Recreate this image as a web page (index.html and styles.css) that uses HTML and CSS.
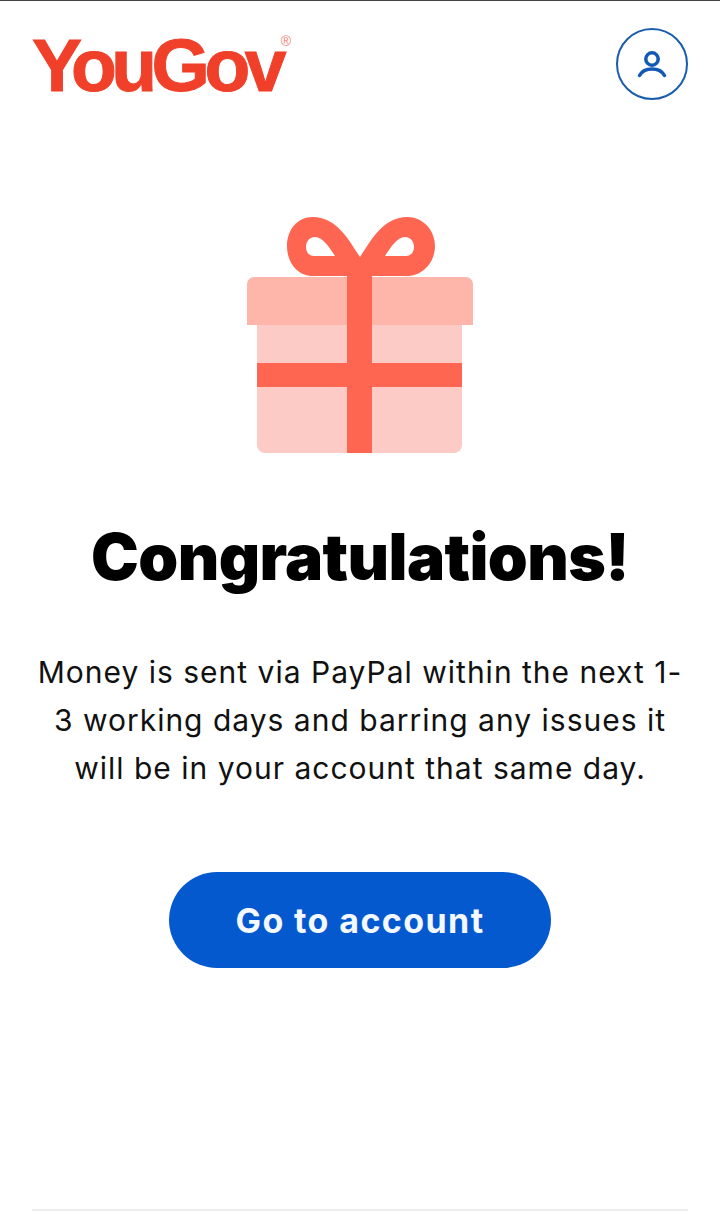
FILE: index.html
```html
<!DOCTYPE html>
<html lang="en">

<head>
  <meta charset="UTF-8">
  <meta name="viewport" content="width=device-width, initial-scale=1.0">
  <title>YouGov - Congratulations</title>
  <link rel="stylesheet" href="styles.css">
</head>

<body>
  <header class="top-bar">
    <div class="logo">YouGov<span class="logo-reg">®</span></div>
    <div class="account-icon">
      <svg width="32" height="32" viewBox="0 0 32 32" fill="none" stroke="#1259b5" stroke-width="3.5" stroke-linecap="round">
        <circle cx="16" cy="11" r="6.200" />
        <path d="M3.500 27.500c2.200-4.200 6.800-6.500 12.500-6.500s10.300 2.300 12.500 6.500" />
      </svg>
    </div>
  </header>

  <main class="content">
    <svg class="gift" width="226" height="236" viewBox="0 0 226 236">
      <rect class="gift-body" x="10" y="100" width="205" height="136" rx="8" />
      <path class="gift-lid" d="M7 60H219a7 7 0 0 1 7 7V108H0V67a7 7 0 0 1 7-7z" />
      <path class="gift-ribbon" fill-rule="evenodd" d="M113 40C104 27 91 0 66 0C50 0 40 13 40 29C40 45 50 59 66 59H160C176 59 188 45 188 29C188 13 176 0 160 0C135 0 122 27 113 40zM88 39H67C62 39 59 35 59 30C59 24 63 20 68 20C76 20 82 30 88 39zM138 39H159C164 39 167 35 167 30C167 24 163 20 158 20C150 20 144 30 138 39z" />
      <rect class="gift-ribbon" x="100" y="59" width="25" height="177" />
      <rect class="gift-ribbon" x="10" y="146" width="205" height="24" />
    </svg>

    <h1>Congratulations!</h1>
    <p class="message">Money is sent via PayPal within the next 1-<br>3 working days and barring any issues it<br>will be in your account that same day.</p>
    <a class="account-btn" href="#">Go to account</a>
  </main>

  <footer class="footer-line"></footer>
</body>

</html>
```

FILE: styles.css
```css
html,
body {
  height: 100%;
}

body {
  margin: 0;
  background: #fff;
  border-top: 1px solid #444;
  box-sizing: border-box;
  font-family: 'Inter', 'Liberation Sans', sans-serif;
  color: #000;
  display: flex;
  flex-direction: column;
  overflow: hidden;
}

.top-bar {
  display: flex;
  justify-content: space-between;
  align-items: flex-start;
  padding: 27px 32px 0 32px;
}

.logo {
  position: relative;
  font-family: 'Liberation Sans', Arial, sans-serif;
  font-weight: 700;
  font-size: 75px;
  line-height: 75px;
  letter-spacing: -5.5px;
  color: #f0402a;
  -webkit-text-stroke: 1px #f0402a;
}

.logo-reg {
  position: absolute;
  top: 5px;
  right: -10px;
  font-size: 14px;
  line-height: 16px;
  letter-spacing: 0;
  font-weight: 400;
  color: #f0806e;
  -webkit-text-stroke: 0;
}

.account-icon {
  width: 72px;
  height: 72px;
  box-sizing: border-box;
  border: 2px solid #1a5cae;
  border-radius: 50%;
  display: flex;
  justify-content: center;
  align-items: center;
}

.content {
  flex: 1;
  display: flex;
  flex-direction: column;
  align-items: center;
  padding-top: 114px;
}

.gift-body {
  fill: #fdcbc5;
}

.gift-lid {
  fill: #feb5aa;
}

.gift-ribbon {
  fill: #ff6652;
}

h1 {
  margin: 65px 0 0 0;
  font-size: 64px;
  line-height: 78px;
  font-weight: 900;
  letter-spacing: -0.6px;
  text-align: center;
}

.message {
  margin: 52px 0 0 0;
  font-size: 30px;
  line-height: 48px;
  font-weight: 400;
  letter-spacing: 1px;
  text-align: center;
  color: #111;
}

.account-btn {
  margin-top: 80px;
  width: 382px;
  height: 96px;
  border-radius: 48px;
  background: #0559cf;
  color: #f4f8ff;
  display: flex;
  justify-content: center;
  align-items: center;
  font-size: 34px;
  font-weight: 700;
  letter-spacing: 1.4px;
  text-decoration: none;
}

.footer-line {
  height: 2px;
  margin: 0 32px 3px 32px;
  background: #eeeeee;
}
```
